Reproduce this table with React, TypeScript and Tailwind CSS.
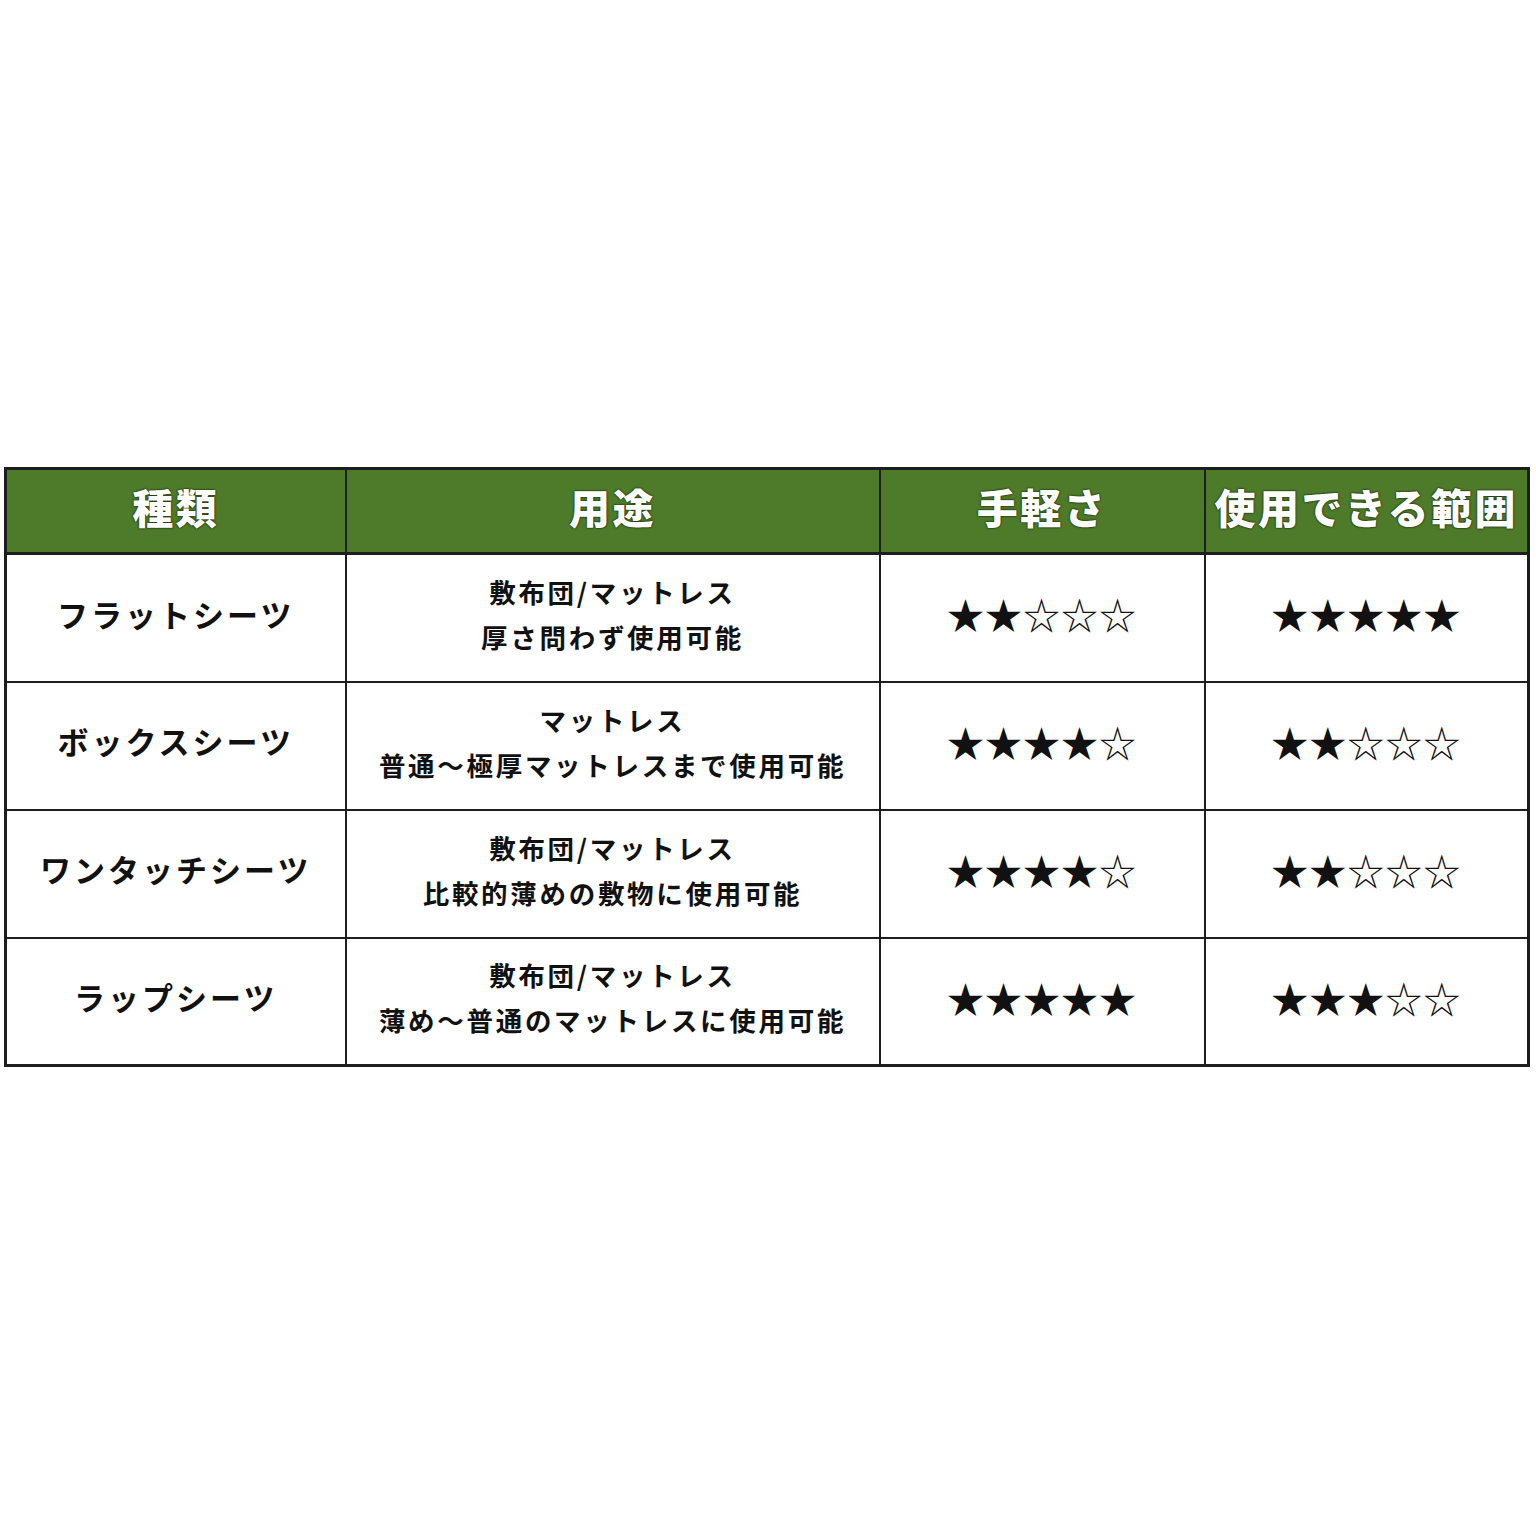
const rows = [
  {
    name: "フラットシーツ",
    use: ["敷布団/マットレス", "厚さ問わず使用可能"],
    ease: 2,
    range: 5,
  },
  {
    name: "ボックスシーツ",
    use: ["マットレス", "普通〜極厚マットレスまで使用可能"],
    ease: 4,
    range: 2,
  },
  {
    name: "ワンタッチシーツ",
    use: ["敷布団/マットレス", "比較的薄めの敷物に使用可能"],
    ease: 4,
    range: 2,
  },
  {
    name: "ラップシーツ",
    use: ["敷布団/マットレス", "薄め〜普通のマットレスに使用可能"],
    ease: 5,
    range: 3,
  },
];

const headers = ["種類", "用途", "手軽さ", "使用できる範囲"];

function Stars({ count }: { count: number }) {
  return (
    <span className="text-[37px] tracking-[1px] leading-none text-[#111]">
      {"★".repeat(count)}
      {"☆".repeat(5 - count)}
    </span>
  );
}

export default function App() {
  return (
    <div
      className="min-h-[1536px] w-[1536px] bg-white pt-[467px] pl-[4px]"
      style={{ fontFamily: '"Noto Sans CJK JP", "Noto Sans", sans-serif' }}
    >
      <table className="border-collapse border-[3px] border-[#1e1e1e]">
        <colgroup>
          <col className="w-[340px]" />
          <col className="w-[534px]" />
          <col className="w-[325px]" />
          <col className="w-[324px]" />
        </colgroup>
        <thead>
          <tr className="h-[85px] bg-[#4e7b29]">
            {headers.map((h) => (
              <th
                key={h}
                className="border-x-2 border-b-[3px] border-[#1e1e1e] p-0 pb-[8px] text-center text-[41px] font-black tracking-[2.5px] text-white [text-shadow:0_0_2px_#1b2a0c,0_0_2px_#1b2a0c]"
              >
                {h}
              </th>
            ))}
          </tr>
        </thead>
        <tbody>
          {rows.map((r) => (
            <tr key={r.name} className="h-[128px]">
              <td className="border-2 border-[#1e1e1e] pb-[8px] text-center text-[31px] font-bold tracking-[3px] text-[#111]">
                {r.name}
              </td>
              <td className="border-2 border-[#1e1e1e] pb-[8px] text-center text-[26.5px] font-bold leading-[45px] tracking-[2.7px] text-[#111]">
                {r.use.map((u) => (
                  <div key={u}>{u}</div>
                ))}
              </td>
              <td className="border-2 border-[#1e1e1e] pb-[4px] text-center">
                <Stars count={r.ease} />
              </td>
              <td className="border-2 border-[#1e1e1e] pb-[4px] text-center">
                <Stars count={r.range} />
              </td>
            </tr>
          ))}
        </tbody>
      </table>
    </div>
  );
}
